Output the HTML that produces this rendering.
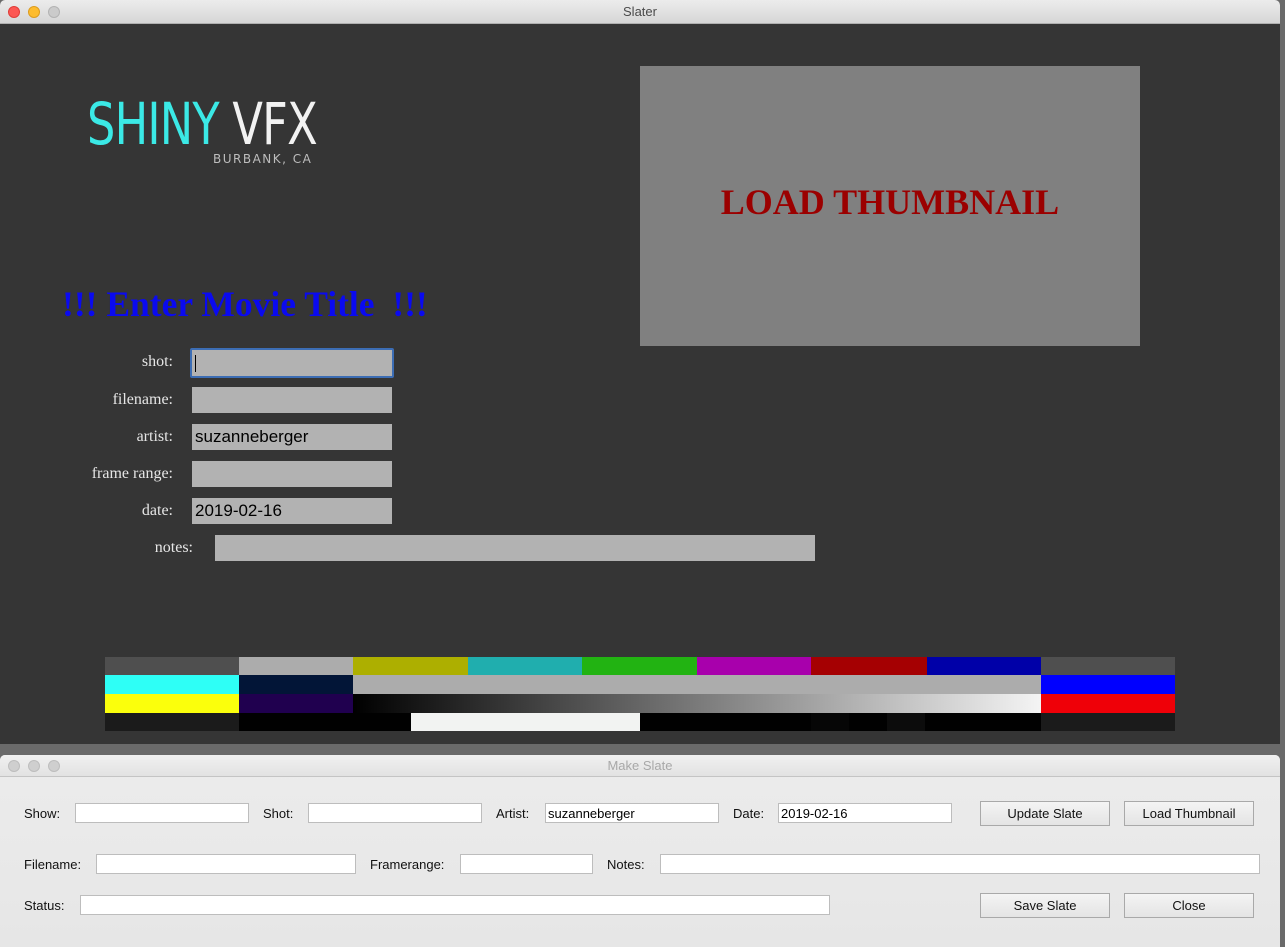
<!DOCTYPE html>
<html><head><meta charset="utf-8"><style>
*{margin:0;padding:0;box-sizing:border-box}
body{width:1285px;height:947px;background:#6a6a6a;position:relative;overflow:hidden;font-family:"Liberation Sans",sans-serif}
.a{position:absolute}
.win1{left:0;top:0;width:1280px;height:744px;background:#353535;border-radius:5px 5px 0 0;overflow:hidden}
.tb{left:0;top:0;width:100%;height:24px;background:linear-gradient(#ececec,#d6d6d6);border-bottom:1px solid #b0b0b0;text-align:center;font-size:13px;line-height:24px;color:#4a4a4a}
.dot{width:12px;height:12px;border-radius:50%;top:6px}
.lbl{font-family:"Liberation Serif",serif;color:#e6e6e6;font-size:16px;text-align:right;width:120px}
.fld{background:#b2b2b2;height:26px;font-size:17px;color:#000;padding-left:3px;line-height:26px}
.win2{left:0;top:755px;width:1280px;height:192px;background:linear-gradient(#ececec,#e6e6e6);border-radius:5px 5px 0 0;overflow:hidden}
.tb2{left:0;top:0;width:100%;height:22px;background:linear-gradient(#f0f0f0,#e2e2e2);border-bottom:1px solid #c4c4c4;text-align:center;font-size:13px;line-height:22px;color:#a8a8a8}
.l2{font-size:13px;color:#111;line-height:21px}
.in{background:#fff;border:1px solid #bdbdbd;height:20px;font-size:13px;line-height:18px;padding-left:2px;color:#000}
.btn{border:1px solid #a9a9a9;background:linear-gradient(#f4f4f4,#e4e4e4);height:25px;width:130px;font-size:13px;text-align:center;line-height:23px;color:#111}
</style></head><body>
<div class="a win1">
 <div class="a tb">Slater</div>
 <div class="a dot" style="left:8px;background:#fc5753;border:1px solid #df3d38"></div>
 <div class="a dot" style="left:28px;background:#fdbc2e;border:1px solid #dc9c1f"></div>
 <div class="a dot" style="left:48px;background:#cbcbcb;border:1px solid #b3b3b3"></div>

 <div class="a" style="left:87px;top:90px;font-size:58px;line-height:68px;font-family:'DejaVu Sans',sans-serif;font-weight:normal;transform:scaleX(0.77);transform-origin:0 0;white-space:nowrap;letter-spacing:-1px"><span style="color:#3be9e6">SHINY</span> <span style="color:#f2f2f2">VFX</span></div>
 <div class="a" style="left:213px;top:152px;font-size:12px;color:#bdbdbd;letter-spacing:1.5px;font-family:'DejaVu Sans',sans-serif">BURBANK, CA</div>

 <div class="a" style="left:640px;top:66px;width:500px;height:280px;background:#808080"></div>
 <div class="a" style="left:640px;top:181px;width:500px;text-align:center;font-family:'Liberation Serif',serif;font-weight:bold;font-size:36px;color:#9b0000">LOAD THUMBNAIL</div>

 <div class="a" style="left:62px;top:283px;font-family:'Liberation Serif',serif;font-weight:bold;font-size:35.5px;color:#0a0af0;white-space:pre">!!! Enter Movie Title  !!!</div>

 <div class="a lbl" style="left:53px;top:353px">shot:</div>
 <div class="a fld" style="left:190px;top:348px;width:204px;height:30px;border:2px solid #3c6db4;border-radius:2px"><span style="display:inline-block;width:1px;height:17px;background:#000;margin-top:5px"></span></div>
 <div class="a lbl" style="left:53px;top:391px">filename:</div>
 <div class="a fld" style="left:192px;top:387px;width:200px"></div>
 <div class="a lbl" style="left:53px;top:428px">artist:</div>
 <div class="a fld" style="left:192px;top:424px;width:200px">suzanneberger</div>
 <div class="a lbl" style="left:53px;top:465px">frame range:</div>
 <div class="a fld" style="left:192px;top:461px;width:200px"></div>
 <div class="a lbl" style="left:53px;top:502px">date:</div>
 <div class="a fld" style="left:192px;top:498px;width:200px">2019-02-16</div>
 <div class="a lbl" style="left:73px;top:539px">notes:</div>
 <div class="a fld" style="left:215px;top:535px;width:600px"></div>

 <div class="a" style="left:105px;top:657px;width:1070px;height:74px">
  <div class="a" style="left:0;top:0;width:134px;height:18px;background:#4f4f4f"></div>
  <div class="a" style="left:134px;top:0;width:114px;height:18px;background:#acacac"></div>
  <div class="a" style="left:248px;top:0;width:115px;height:18px;background:#adaf00"></div>
  <div class="a" style="left:363px;top:0;width:114px;height:18px;background:#20aeae"></div>
  <div class="a" style="left:477px;top:0;width:115px;height:18px;background:#22b312"></div>
  <div class="a" style="left:592px;top:0;width:114px;height:18px;background:#a800ac"></div>
  <div class="a" style="left:706px;top:0;width:116px;height:18px;background:#a50002"></div>
  <div class="a" style="left:822px;top:0;width:114px;height:18px;background:#0000a8"></div>
  <div class="a" style="left:936px;top:0;width:134px;height:18px;background:#4f4f4f"></div>
  <div class="a" style="left:0;top:18px;width:134px;height:19px;background:#2efff6"></div>
  <div class="a" style="left:134px;top:18px;width:114px;height:19px;background:#021537"></div>
  <div class="a" style="left:248px;top:18px;width:688px;height:19px;background:#acacac"></div>
  <div class="a" style="left:936px;top:18px;width:134px;height:19px;background:#0000ff"></div>
  <div class="a" style="left:0;top:37px;width:134px;height:19px;background:#fbff0c"></div>
  <div class="a" style="left:134px;top:37px;width:114px;height:19px;background:#20004f"></div>
  <div class="a" style="left:248px;top:37px;width:688px;height:19px;background:linear-gradient(90deg,#000,#f4f4f4)"></div>
  <div class="a" style="left:936px;top:37px;width:134px;height:19px;background:#ef0008"></div>
  <div class="a" style="left:0;top:56px;width:134px;height:18px;background:#1b1b1b"></div>
  <div class="a" style="left:134px;top:56px;width:802px;height:18px;background:#010101"></div>
  <div class="a" style="left:306px;top:56px;width:229px;height:18px;background:#f2f3f2"></div>
  <div class="a" style="left:706px;top:56px;width:38px;height:18px;background:#060606"></div>
  <div class="a" style="left:782px;top:56px;width:38px;height:18px;background:#0c0c0c"></div>
  <div class="a" style="left:936px;top:56px;width:134px;height:18px;background:#1b1b1b"></div>
 </div>
</div>

<div class="a win2">
 <div class="a tb2">Make Slate</div>
 <div class="a dot" style="left:8px;top:5px;background:#cfcfcf;border:1px solid #bdbdbd"></div>
 <div class="a dot" style="left:28px;top:5px;background:#cfcfcf;border:1px solid #bdbdbd"></div>
 <div class="a dot" style="left:48px;top:5px;background:#cfcfcf;border:1px solid #bdbdbd"></div>

 <div class="a l2" style="left:24px;top:48px">Show:</div>
 <div class="a in" style="left:75px;top:48px;width:174px"></div>
 <div class="a l2" style="left:263px;top:48px">Shot:</div>
 <div class="a in" style="left:308px;top:48px;width:174px"></div>
 <div class="a l2" style="left:496px;top:48px">Artist:</div>
 <div class="a in" style="left:545px;top:48px;width:174px;line-height:20px">suzanneberger</div>
 <div class="a l2" style="left:733px;top:48px">Date:</div>
 <div class="a in" style="left:778px;top:48px;width:174px;line-height:20px">2019-02-16</div>
 <div class="a btn" style="left:980px;top:46px">Update Slate</div>
 <div class="a btn" style="left:1124px;top:46px">Load Thumbnail</div>

 <div class="a l2" style="left:24px;top:99px">Filename:</div>
 <div class="a in" style="left:96px;top:99px;width:260px"></div>
 <div class="a l2" style="left:370px;top:99px">Framerange:</div>
 <div class="a in" style="left:460px;top:99px;width:133px"></div>
 <div class="a l2" style="left:607px;top:99px">Notes:</div>
 <div class="a in" style="left:660px;top:99px;width:600px"></div>

 <div class="a l2" style="left:24px;top:140px">Status:</div>
 <div class="a in" style="left:80px;top:140px;width:750px"></div>
 <div class="a btn" style="left:980px;top:138px">Save Slate</div>
 <div class="a btn" style="left:1124px;top:138px">Close</div>
</div>
</body></html>
